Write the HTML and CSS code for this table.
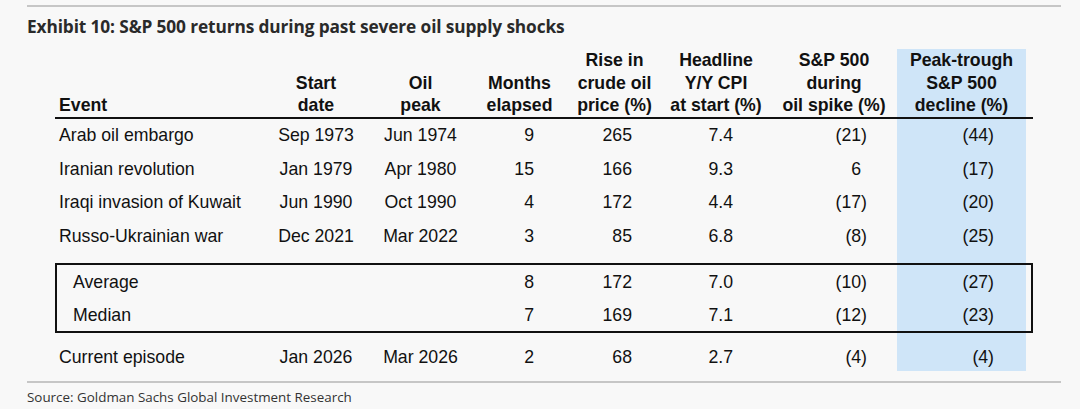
FILE: index.html
```html
<!DOCTYPE html>
<html lang="en">
<head>
<meta charset="utf-8">
<title>Exhibit 10</title>
<link rel="stylesheet" href="styles.css">
</head>
<body>
<div class="page">
  <div class="rule"></div>
  <h1 class="title">Exhibit 10: S&amp;P 500 returns during past severe oil supply shocks</h1>
  <div class="tbl">
    <div class="hl"></div>
    <div class="hrule"></div>
    <div class="box"></div>

    <div class="row h">
      <div class="c1 ev">Event</div>
      <div class="c2">Start<br>date</div>
      <div class="c3">Oil<br>peak</div>
      <div class="c4">Months<br>elapsed</div>
      <div class="c5">Rise in<br>crude oil<br>price (%)</div>
      <div class="c6">Headline<br>Y/Y CPI<br>at start (%)</div>
      <div class="c7">S&amp;P 500<br>during<br>oil spike (%)</div>
      <div class="c8">Peak-trough<br>S&amp;P 500<br>decline (%)</div>
    </div>

    <div class="row d r1">
      <div class="c1">Arab oil embargo</div>
      <div class="c2">Sep 1973</div>
      <div class="c3">Jun 1974</div>
      <div class="c4">9</div>
      <div class="c5">265</div>
      <div class="c6">7.4</div>
      <div class="c7">(21)</div>
      <div class="c8">(44)</div>
    </div>
    <div class="row d r2">
      <div class="c1">Iranian revolution</div>
      <div class="c2">Jan 1979</div>
      <div class="c3">Apr 1980</div>
      <div class="c4">15</div>
      <div class="c5">166</div>
      <div class="c6">9.3</div>
      <div class="c7 pos">6</div>
      <div class="c8">(17)</div>
    </div>
    <div class="row d r3">
      <div class="c1">Iraqi invasion of Kuwait</div>
      <div class="c2">Jun 1990</div>
      <div class="c3">Oct 1990</div>
      <div class="c4">4</div>
      <div class="c5">172</div>
      <div class="c6">4.4</div>
      <div class="c7">(17)</div>
      <div class="c8">(20)</div>
    </div>
    <div class="row d r4">
      <div class="c1">Russo-Ukrainian war</div>
      <div class="c2">Dec 2021</div>
      <div class="c3">Mar 2022</div>
      <div class="c4">3</div>
      <div class="c5">85</div>
      <div class="c6">6.8</div>
      <div class="c7">(8)</div>
      <div class="c8">(25)</div>
    </div>
    <div class="row d stat r5">
      <div class="c1">Average</div>
      <div class="c4">8</div>
      <div class="c5">172</div>
      <div class="c6">7.0</div>
      <div class="c7">(10)</div>
      <div class="c8">(27)</div>
    </div>
    <div class="row d stat r6">
      <div class="c1">Median</div>
      <div class="c4">7</div>
      <div class="c5">169</div>
      <div class="c6">7.1</div>
      <div class="c7">(12)</div>
      <div class="c8">(23)</div>
    </div>
    <div class="row d r7">
      <div class="c1">Current episode</div>
      <div class="c2">Jan 2026</div>
      <div class="c3">Mar 2026</div>
      <div class="c4">2</div>
      <div class="c5">68</div>
      <div class="c6">2.7</div>
      <div class="c7">(4)</div>
      <div class="c8">(4)</div>
    </div>
  </div>
  <div class="rule bottom"></div>
  <p class="source">Source: Goldman Sachs Global Investment Research</p>
</div>
</body>
</html>
```

FILE: styles.css
```css
html, body {
  margin: 0;
  padding: 0;
  background: #f8f8f8;
}

.page {
  width: 1034px;
  padding: 5px 0 0 27px;
}

.rule {
  height: 2px;
  background: #c6c6c6;
}

.title {
  margin: 7.5px 0 0 0;
  font-family: "Open Sans", "Noto Sans", sans-serif;
  font-weight: 700;
  font-size: 17.3px;
  letter-spacing: -0.12px;
  line-height: 24px;
  color: #2a2a2a;
}

.tbl {
  display: grid;
  grid-template-columns: 207px 108px 101px 97px 93px 110px 126px 129px 7px;
  grid-template-rows: 67.5px 2px 33.5px 33.5px 33.5px 33.5px 10.5px 2px 33px 33px 2px 10px 28px;
  width: 978px;
  margin: 10.5px 0 0 28px;
  font-family: "Liberation Sans", Arial, sans-serif;
  font-size: 17.7px;
  color: #111;
}

.hl {
  grid-column: 8;
  grid-row: 1 / -1;
  background: #cfe5f8;
}

.hrule {
  grid-column: 1 / -1;
  grid-row: 2;
  background: #111;
}

.box {
  grid-column: 1 / -1;
  grid-row: 8 / 12;
  border: 2px solid #111;
}

.row { display: contents; }

.c1 { grid-column: 1; }
.c2 { grid-column: 2; }
.c3 { grid-column: 3; }
.c4 { grid-column: 4; }
.c5 { grid-column: 5; }
.c6 { grid-column: 6; }
.c7 { grid-column: 7; }
.c8 { grid-column: 8; }

.h > div {
  grid-row: 1;
  align-self: end;
  text-align: center;
  font-weight: 700;
  line-height: 22.5px;
  white-space: nowrap;
}
.h > .ev { text-align: left; padding-left: 4px; }

.r1 > div { grid-row: 3; }
.r2 > div { grid-row: 4; }
.r3 > div { grid-row: 5; }
.r4 > div { grid-row: 6; }
.r5 > div { grid-row: 9; }
.r6 > div { grid-row: 10; }
.r7 > div { grid-row: 13; }

.d > div {
  align-self: center;
  line-height: 20px;
  white-space: nowrap;
}
.d > .c1 { padding-left: 4px; }
.stat > .c1 { padding-left: 18px; }
.d > .c2, .d > .c3 { text-align: center; }
.d > .c4 { text-align: right; padding-right: 34px; }
.d > .c5 { text-align: right; padding-right: 29px; }
.d > .c6 { text-align: right; padding-right: 38px; }
.d > .c7 { text-align: right; padding-right: 30px; }
.d > .c8 { text-align: right; padding-right: 32px; }
.d > .c7.pos { padding-right: 36px; }

.rule.bottom { margin-top: 10px; }

.source {
  margin: 5px 0 0 0;
  font-family: "Open Sans", "Noto Sans", sans-serif;
  font-size: 13.4px;
  line-height: 18px;
  color: #333;
}
```
